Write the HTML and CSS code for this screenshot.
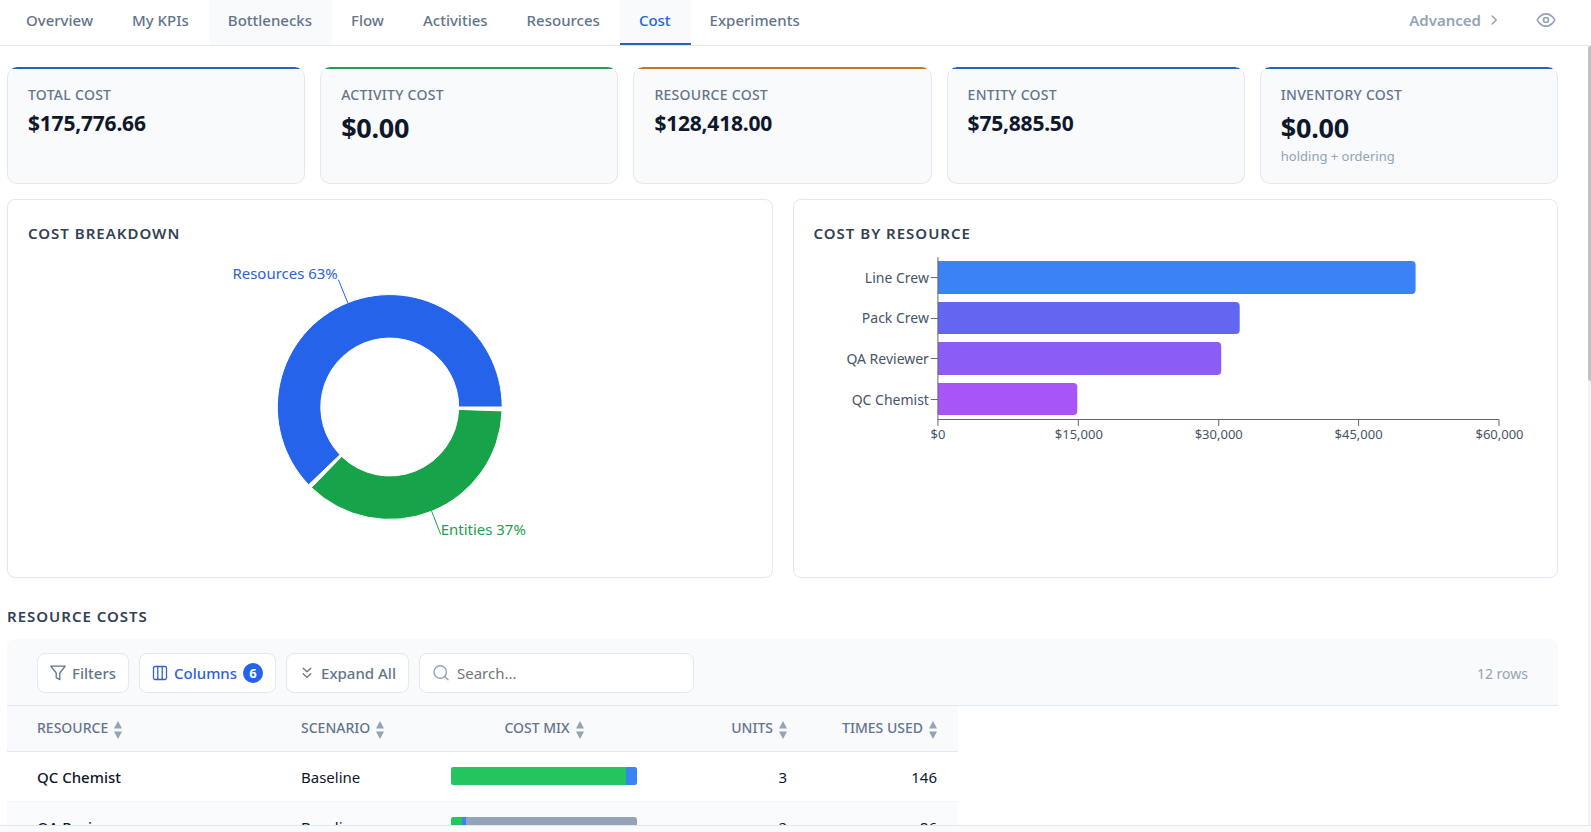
FILE: index.html
```html
<!DOCTYPE html>
<html lang="en">
<head>
<meta charset="utf-8">
<title>Cost</title>
<link rel="stylesheet" href="styles.css">
</head>
<body>
<nav class="tabs">
  <a class="tab" href="#overview">Overview</a>
  <a class="tab" href="#kpis">My KPIs</a>
  <a class="tab tab-hover" href="#bottlenecks">Bottlenecks</a>
  <a class="tab" href="#flow">Flow</a>
  <a class="tab" href="#activities">Activities</a>
  <a class="tab" href="#resources">Resources</a>
  <a class="tab tab-active" href="#cost" aria-current="page">Cost</a>
  <a class="tab" href="#experiments">Experiments</a>
  <div class="tabs-end">
    <button class="ghost" type="button">Advanced
      <svg width="16" height="16" viewBox="0 0 16 16" fill="none" stroke="currentColor" stroke-width="1.5" stroke-linecap="round" stroke-linejoin="round"><path d="M6.2 4l4 4-4 4"/></svg>
    </button>
    <button class="ghost" type="button" aria-label="Visibility">
      <svg width="20" height="20" viewBox="0 0 24 24" fill="none" stroke="currentColor" stroke-width="2" stroke-linecap="round" stroke-linejoin="round"><path d="M1.5 12S5 4.6 12 4.6 22.500 12 22.500 12 19 19.400 12 19.400 1.500 12 1.500 12z"/><circle cx="12" cy="12" r="3"/></svg>
    </button>
  </div>
</nav>

<div class="viewport">
  <main class="page">
    <section class="cards">
      <article class="card blue"><h2 class="card-label">Total cost</h2><p class="card-value">$175,776.66</p></article>
      <article class="card green"><h2 class="card-label">Activity cost</h2><p class="card-value large">$0.00</p></article>
      <article class="card amber"><h2 class="card-label">Resource cost</h2><p class="card-value">$128,418.00</p></article>
      <article class="card blue"><h2 class="card-label">Entity cost</h2><p class="card-value">$75,885.50</p></article>
      <article class="card blue"><h2 class="card-label">Inventory cost</h2><p class="card-value large">$0.00</p><p class="card-note">holding + ordering</p></article>
    </section>

    <section class="panels">
      <article class="panel">
        <h2 class="heading">Cost breakdown</h2>
        <svg class="chart" viewBox="0 0 724 300" role="img" aria-label="Cost breakdown">
          <path fill="#2563eb" stroke="#fff" d="M474.500 150A112.500 112.500 0 1 0 280.800 227.860L312.200 197.760A69 69 0 1 1 431 150Z"/>
          <path fill="#16a34a" stroke="#fff" d="M283.570 230.650A112.500 112.500 0 0 0 474.430 153.930L430.960 152.410A69 69 0 0 1 313.890 199.470Z"/>
          <path class="leader-blue" d="M320.200 46.100L310.500 22.500"/>
          <path class="leader-green" d="M403.800 253.900L413 277.500"/>
          <text class="slice-label" x="310" y="22" text-anchor="end" fill="#2f62cf">Resources 63%</text>
          <text class="slice-label" x="413" y="278" fill="#2a9a52">Entities 37%</text>
        </svg>
      </article>
      <article class="panel">
        <h2 class="heading">Cost by resource</h2>
        <svg class="chart" viewBox="0 0 724 300" role="img" aria-label="Cost by resource">
          <path fill="#3b82f6" d="M124 4H598a4 4 0 0 1 4 4V33a4 4 0 0 1-4 4H124z"/>
          <path fill="#6366f1" d="M124 45H422a4 4 0 0 1 4 4V73a4 4 0 0 1-4 4H124z"/>
          <path fill="#8b5cf6" d="M124 85H403.500a4 4 0 0 1 4 4V114a4 4 0 0 1-4 4H124z"/>
          <path fill="#a855f7" d="M124 126H259.500a4 4 0 0 1 4 4V154a4 4 0 0 1-4 4H124z"/>
          <path class="axis" d="M124 0V169M124 162.500H685.500V169M264.500 162.500V169M405 162.500V169M545 162.500V169M117 20.500H124M117 61.500H124M117 101.500H124M117 142.500H124"/>
          <g class="names" text-anchor="end">
            <text x="115" y="26">Line Crew</text>
            <text x="115" y="66">Pack Crew</text>
            <text x="115" y="107">QA Reviewer</text>
            <text x="115" y="148">QC Chemist</text>
          </g>
          <g class="ticks" text-anchor="middle">
            <text x="124" y="182">$0</text>
            <text x="265" y="182">$15,000</text>
            <text x="405" y="182">$30,000</text>
            <text x="545" y="182">$45,000</text>
            <text x="686" y="182">$60,000</text>
          </g>
        </svg>
      </article>
    </section>

    <section class="costs">
      <h2 class="heading">Resource costs</h2>
      <div class="toolbar">
        <button class="tool" type="button">
          <svg width="16" height="16" viewBox="0 0 16 16" fill="none" stroke="currentColor" stroke-width="1.300" stroke-linejoin="round"><path d="M.8 1.200H15.200L9.800 8V14.600L6.200 12.600V8z"/></svg>
          Filters
        </button>
        <button class="tool tool-on" type="button">
          <svg width="16" height="16" viewBox="0 0 16 16" fill="none" stroke="currentColor" stroke-width="1.300"><rect x="1.500" y="1.500" width="13" height="13" rx="1.500"/><path d="M5.800 1.500v13M10.200 1.500v13"/></svg>
          Columns <span class="badge">6</span>
        </button>
        <button class="tool" type="button">
          <svg width="16" height="16" viewBox="0 0 16 16" fill="none" stroke="currentColor" stroke-width="1.300" stroke-linecap="round" stroke-linejoin="round"><path d="M4.200 3.200L8 6.800l3.800-3.600M4.200 8.800L8 12.400l3.800-3.600"/></svg>
          Expand All
        </button>
        <label class="search">
          <svg width="16" height="16" viewBox="0 0 16 16" fill="none" stroke="currentColor" stroke-width="1.400" stroke-linecap="round"><circle cx="7.200" cy="7" r="6.200"/><path d="M11.800 11.500l3.200 3.200"/></svg>
          <input class="search-input" type="text" placeholder="Search..." aria-label="Search">
        </label>
        <span class="count">12 rows</span>
      </div>
      <table class="grid">
        <colgroup><col class="c-name"><col class="c-std"><col class="c-mix"><col class="c-std"><col class="c-std"></colgroup>
        <thead>
          <tr>
            <th>Resource<svg class="sort" viewBox="0 0 8 18"><path d="M4 0l4 7.500H0zM4 18l4-7.500H0z"/></svg></th>
            <th>Scenario<svg class="sort" viewBox="0 0 8 18"><path d="M4 0l4 7.500H0zM4 18l4-7.500H0z"/></svg></th>
            <th class="mid">Cost mix<svg class="sort" viewBox="0 0 8 18"><path d="M4 0l4 7.500H0zM4 18l4-7.500H0z"/></svg></th>
            <th class="num">Units<svg class="sort" viewBox="0 0 8 18"><path d="M4 0l4 7.500H0zM4 18l4-7.500H0z"/></svg></th>
            <th class="num">Times used<svg class="sort" viewBox="0 0 8 18"><path d="M4 0l4 7.500H0zM4 18l4-7.500H0z"/></svg></th>
          </tr>
        </thead>
        <tbody>
          <tr>
            <td class="name">QC Chemist</td><td>Baseline</td>
            <td><div class="mix"><span class="busy" style="width:94%"></span><span class="idle" style="width:6%"></span></div></td>
            <td class="num">3</td><td class="num">146</td>
          </tr>
          <tr>
            <td class="name">QA Reviewer</td><td>Baseline</td>
            <td><div class="mix"><span class="busy" style="width:6%"></span><span class="idle" style="width:2%"></span></div></td>
            <td class="num">2</td><td class="num">86</td>
          </tr>
        </tbody>
      </table>
    </section>
  </main>
  <div class="rail" aria-hidden="true"><div class="thumb"></div></div>
</div>
<footer class="foot"></footer>
</body>
</html>
```
FILE: styles.css
```css
* { box-sizing: border-box; }

body {
  margin: 0;
  height: 100vh;
  display: flex;
  flex-direction: column;
  overflow: hidden;
  background: #fff;
  color: #0f172a;
  font-family: "Noto Sans", "Open Sans", sans-serif;
  font-size: 15px;
}

h2, p { margin: 0; }

button, input { font: inherit; }

svg { flex: none; }

.tabs {
  display: flex;
  flex: none;
  height: 46px;
  padding: 0 27px 0 7px;
  border-bottom: 1px solid #e2e8f0;
}

.tab {
  display: flex;
  align-items: center;
  padding: 0 20px 6px 19px;
  color: #64748b;
  font-weight: 500;
  text-decoration: none;
}

.tab-hover { background: #f8fafc; }

.tab-active {
  padding-bottom: 4px;
  border-bottom: 2px solid #2563c9;
  background: #f8fafc;
  color: #2563eb;
}

.tabs-end {
  display: flex;
  align-items: center;
  gap: 18px;
  margin-left: auto;
  padding-bottom: 6px;
}

.ghost {
  display: flex;
  align-items: center;
  gap: 5px;
  padding: 0 8px;
  border: 0;
  background: none;
  color: #94a3b8;
  font-weight: 600;
}

.viewport {
  display: flex;
  flex: 1;
  min-height: 0;
}

.page {
  flex: 1;
  min-width: 0;
  overflow: hidden;
  padding: 21px 30px 0 7px;
}

.rail {
  flex: none;
  width: 3px;
  background: #f1f1f1;
}

.thumb {
  height: 43%;
  border-radius: 3px 0 0 3px;
  background: #c1c1c1;
}

.foot {
  flex: none;
  height: 7px;
  border-top: 1px solid #e2e8f0;
  background: #f8fafc;
}

.cards {
  display: grid;
  grid-template-columns: repeat(5, 1fr);
  gap: 15px;
}

.card {
  min-height: 117px;
  padding: 18px 20px 15px;
  border: 1px solid #e2e8f0;
  border-top: 0;
  border-radius: 10px;
  background: linear-gradient(var(--accent), var(--accent)) top / 100% 2px no-repeat #f8fafc;
}

.blue { --accent: #2563c0; }
.green { --accent: #239a57; }
.amber { --accent: #c07a1c; }

.card-label {
  color: #64748b;
  font-size: 14px;
  font-weight: 500;
  letter-spacing: 0.02em;
  line-height: 20px;
  text-transform: uppercase;
}

.card-value {
  margin-top: 2px;
  font-size: 21px;
  font-weight: 700;
  letter-spacing: -0.01em;
  line-height: 32px;
}

.large {
  font-size: 27px;
  line-height: 41px;
}

.card-note {
  color: #94a3b8;
  font-size: 13px;
  line-height: 16px;
}

.panels {
  display: grid;
  grid-template-columns: 1fr 1fr;
  gap: 20px;
  margin-top: 15px;
}

.panel {
  padding: 20px;
  border: 1px solid #e2e8f0;
  border-radius: 8px;
}

.heading {
  color: #334155;
  font-size: 15px;
  font-weight: 600;
  letter-spacing: 1px;
  line-height: 27px;
  text-transform: uppercase;
}

.chart {
  display: block;
  width: 100%;
  height: 300px;
  margin-top: 10px;
  overflow: visible;
}

.leader-blue { stroke: #2563eb; }
.leader-green { stroke: #16a34a; }
.slice-label { font-size: 15px; }
.axis { fill: none; stroke: #666; }
.names { fill: #475569; font-size: 14px; }
.ticks { fill: #475569; font-size: 13px; }

.costs { margin-top: 25px; }

.toolbar {
  display: flex;
  align-items: center;
  gap: 10px;
  margin-top: 9px;
  padding: 14px 30px 12px;
  border-bottom: 1px solid #e2e8f0;
  border-radius: 8px 8px 0 0;
  background: #f8fafc;
}

.tool {
  display: flex;
  align-items: center;
  gap: 6px;
  height: 40px;
  padding: 0 12px;
  border: 1px solid #e2e8f0;
  border-radius: 8px;
  background: #fff;
  color: #64748b;
  font-weight: 500;
}

.tool-on { color: #2f62d0; }

.badge {
  width: 20px;
  height: 20px;
  border-radius: 50%;
  background: #2563eb;
  color: #fff;
  font-size: 13px;
  font-weight: 700;
  line-height: 20px;
  text-align: center;
}

.search {
  display: flex;
  align-items: center;
  gap: 8px;
  width: 275px;
  height: 40px;
  padding: 0 13px;
  border: 1px solid #e2e8f0;
  border-radius: 8px;
  background: #fff;
  color: #94a3b8;
}

.search-input {
  flex: 1;
  min-width: 0;
  padding: 0;
  border: 0;
  outline: 0;
  background: none;
  color: #0f172a;
}

.search-input::placeholder { color: #757575; }

.count {
  margin-left: auto;
  color: #94a3b8;
  font-size: 14px;
}

.grid {
  width: 950px;
  border-collapse: separate;
  border-spacing: 0;
  table-layout: fixed;
}

.c-name { width: 273px; }
.c-std { width: 150px; }
.c-mix { width: 228px; }

.grid th {
  height: 46px;
  padding: 0 21px;
  border-bottom: 1px solid #e2e8f0;
  background: #f8fafc;
  color: #64748b;
  font-size: 14px;
  font-weight: 500;
  text-align: left;
  text-transform: uppercase;
  white-space: nowrap;
}

.grid td {
  height: 50px;
  padding: 0 21px;
  border-bottom: 1px solid #f1f5f9;
}

.grid tr > :first-child { padding-left: 30px; }
.grid tbody tr:nth-child(even) { background: #fafbfd; }
.grid .mid { text-align: center; }
.grid .num { text-align: right; }
.name { font-weight: 500; }

.sort {
  width: 8px;
  height: 18px;
  margin-left: 6px;
  fill: #94a3b8;
  vertical-align: middle;
}

.mix {
  display: flex;
  height: 18px;
  margin-bottom: 2px;
  overflow: hidden;
  border-radius: 3px;
  background: #94a3b8;
}

.busy { background: #22c55e; }
.idle { background: #3b82f6; }
```
